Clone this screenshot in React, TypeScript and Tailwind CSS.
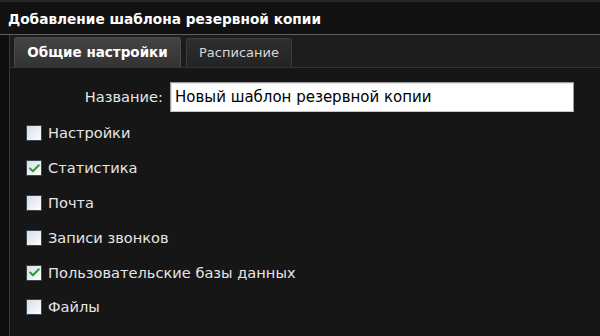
import { Check } from "lucide-react"

const items = [
	{ label: "Настройки", checked: false },
	{ label: "Статистика", checked: true },
	{ label: "Почта", checked: false },
	{ label: "Записи звонков", checked: false },
	{ label: "Пользовательские базы данных", checked: true },
	{ label: "Файлы", checked: false },
]

function Box({ checked }: { checked: boolean }) {
	return (
		<div className="w-[16px] h-[16px] shrink-0 border border-[#3b4650] bg-gradient-to-br from-[#d5dde6] to-[#ffffff] flex items-center justify-center">
			{checked && <Check size={13} strokeWidth={3.5} className="text-[#2e9a2e]" />}
		</div>
	)
}

export default function App() {
	return (
		<div className="w-[600px] h-[336px] overflow-hidden bg-[#0d0d0d] flex flex-col font-['DejaVu_Sans',sans-serif]">
			{/* Title bar */}
			<div className="h-[34px] shrink-0 border-t-2 border-[#262626] bg-[#111111] flex items-center px-[8px] pt-[2px] text-white font-bold text-[13.7px]">
				Добавление шаблона резервной копии
			</div>
			<div className="h-px bg-[#5e5e5e] shrink-0" />

			<div className="flex-1 flex min-h-0 pl-[9px]">
				<div className="flex-1 flex flex-col border-l border-[#3a3a3a]">
					{/* Tabs */}
					<div className="h-[33px] shrink-0 bg-[#1c1c1c] flex items-end gap-[5px] pl-[4px] border-b border-[#343434]">
						<div className="h-[30px] w-[167px] rounded-t-[3px] border border-b-0 border-[#4a4a4a] bg-gradient-to-b from-[#444444] to-[#333333] flex items-center justify-center text-[13.5px] font-bold text-white">
							Общие настройки
						</div>
						<div className="h-[29px] w-[106px] rounded-t-[3px] border border-b-0 border-[#3c3c3c] bg-gradient-to-b from-[#2e2e2e] to-[#242424] flex items-center justify-center text-[13px] text-[#d8d8d8]">
							Расписание
						</div>
					</div>

					{/* Content */}
					<div className="flex-1 bg-[#161616] pt-[14px] pl-[16px] pr-[26px] text-[14.6px] text-[#e6e6e6]">
						<div className="flex items-center h-[30px]">
							<div className="w-[144px] text-right pr-[7px]">Название:</div>
							<div className="flex-1 h-[30px] bg-white border border-[#9a9a9a] border-b-[#c8c8c8] shadow-[inset_1px_1px_0_#e4e4e4] flex items-center px-[4px] text-[15px] text-black">
								Новый шаблон резервной копии
							</div>
						</div>
						<div className="flex flex-col mt-[4px]">
							{items.map((it) => (
								<div key={it.label} className="h-[34.8px] flex items-center gap-[6px]">
									<Box checked={it.checked} />
									<span>{it.label}</span>
								</div>
							))}
						</div>
					</div>
				</div>
			</div>
		</div>
	)
}
